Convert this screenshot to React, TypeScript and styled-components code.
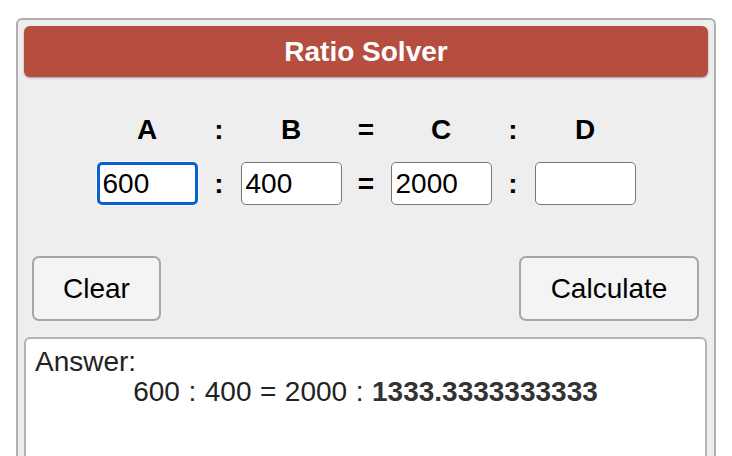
import React from "react";
import styled, { createGlobalStyle } from "styled-components";

const Global = createGlobalStyle`
  html, body {
    margin: 0;
    padding: 0;
    background: #ffffff;
    overflow: hidden;
  }
  body {
    font-family: "Liberation Sans", Arial, sans-serif;
  }
`;

const Panel = styled.div`
  box-sizing: border-box;
  width: 700px;
  margin: 18px 0 0 16px;
  padding: 6px 6px 0 6px;
  border: 2px solid #b0b0b0;
  border-radius: 6px;
  background: #eeeeee;
  height: 520px;
`;

const Header = styled.div`
  height: 51px;
  border-radius: 6px;
  background: #b54e3f;
  box-shadow: 0 1px 2px rgba(0, 0, 0, 0.35);
  color: #ffffff;
  font-size: 28px;
  font-weight: bold;
  display: flex;
  align-items: center;
  justify-content: center;
  padding-top: 1px;
  box-sizing: border-box;
`;

const Grid = styled.div`
  display: grid;
  grid-template-columns: 113px 31px 113px 37px 113px 31px 113px;
  grid-template-rows: 32px 43px;
  row-gap: 16px;
  justify-content: center;
  justify-items: center;
  align-items: center;
  margin-top: 37px;
`;

const Label = styled.div`
  font-size: 28px;
  font-weight: bold;
  line-height: 32px;
  color: #000000;
`;

const Field = styled.input<{ $focused?: boolean }>`
  box-sizing: border-box;
  width: 101px;
  height: 43px;
  margin: 0;
  padding: 0 3px;
  font-family: "Liberation Sans", Arial, sans-serif;
  font-size: 28px;
  color: #000000;
  background: #ffffff;
  border: ${(p) => (p.$focused ? "3px solid #0a62d0" : "1px solid #777777")};
  padding-left: ${(p) => (p.$focused ? "3px" : "4px")};
  border-radius: 5px;
  outline: none;
  box-shadow: ${(p) => (p.$focused ? "0 0 0 1px rgba(255,255,255,0.8)" : "none")};
`;

const ButtonRow = styled.div`
  display: flex;
  justify-content: space-between;
  padding: 0 9px 0 8px;
  margin-top: 51px;
`;

const Button = styled.button<{ $w: number }>`
  box-sizing: border-box;
  width: ${(p) => p.$w}px;
  height: 65px;
  padding: 0;
  font-family: "Liberation Sans", Arial, sans-serif;
  font-size: 28px;
  color: #000000;
  background: #f4f4f4;
  border: 2px solid #a6a6a6;
  border-radius: 7px;
`;

const AnswerBox = styled.div`
  margin-top: 16px;
  margin-right: 1px;
  height: 200px;
  box-sizing: border-box;
  padding: 8px 9px;
  background: #ffffff;
  border: 2px solid #b3b3b3;
  border-radius: 6px;
  font-size: 28px;
  color: #222222;
`;

const AnswerLabel = styled.div`
  line-height: 30px;
`;

const AnswerLine = styled.div`
  line-height: 30px;
  text-align: center;
  word-spacing: 0.75px;
`;

const Result = styled.b`
  font-weight: bold;
  color: #333333;
`;

export default function App() {
  return (
    <>
      <Global />
      <Panel>
        <Header>Ratio Solver</Header>
        <Grid>
          <Label>A</Label>
          <Label>:</Label>
          <Label>B</Label>
          <Label>=</Label>
          <Label>C</Label>
          <Label>:</Label>
          <Label>D</Label>
          <Field $focused defaultValue="600" />
          <Label>:</Label>
          <Field defaultValue="400" />
          <Label>=</Label>
          <Field defaultValue="2000" />
          <Label>:</Label>
          <Field defaultValue="" />
        </Grid>
        <ButtonRow>
          <Button $w={129}>Clear</Button>
          <Button $w={180}>Calculate</Button>
        </ButtonRow>
        <AnswerBox>
          <AnswerLabel>Answer:</AnswerLabel>
          <AnswerLine>
            600 : 400 = 2000 : <Result>1333.3333333333</Result>
          </AnswerLine>
        </AnswerBox>
      </Panel>
    </>
  );
}
